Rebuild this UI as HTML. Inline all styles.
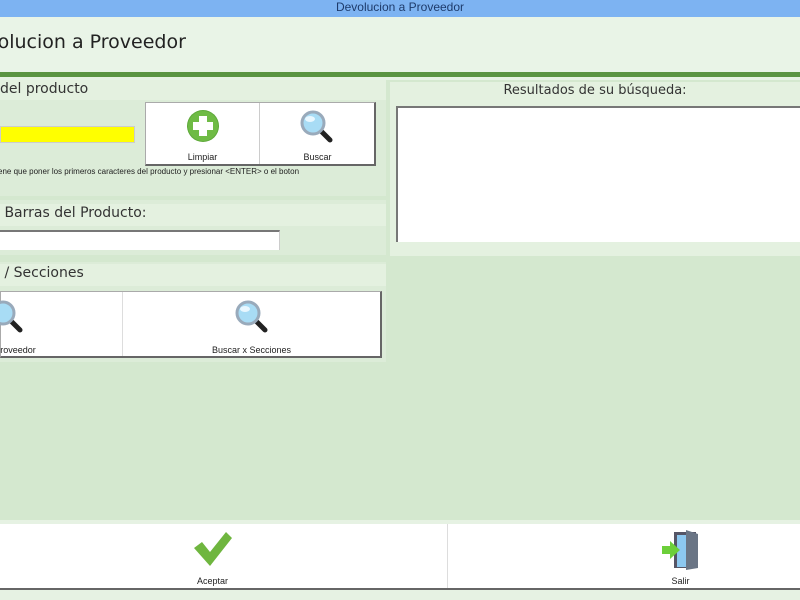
<!DOCTYPE html>
<html><head><meta charset="utf-8"><style>
*{margin:0;padding:0;box-sizing:border-box}
body{width:800px;height:600px;overflow:hidden;background:#d4e8cf;font-family:"DejaVu Sans","Liberation Sans",sans-serif;position:relative;color:#222}
.a{position:absolute}
.t{font-family:"Liberation Sans",sans-serif;font-size:9px;color:#222;text-align:center}
.btn{background:#fff;border:1px solid #aaa;border-right:2px solid #666;border-bottom:2px solid #666}
.hdr{background:#e4f1e0;font-size:14px;color:#333}
</style></head><body>
<div class="a" style="left:0;top:0;width:800px;height:17px;background:#7db3f2;text-align:center;font-family:'Liberation Sans',sans-serif;font-size:12px;color:#1e3b6b;line-height:14px">Devolucion a Proveedor</div>
<div class="a" style="left:0;top:17px;width:800px;height:55px;background:#e9f4e7"></div>
<div class="a" style="left:-40px;top:31px;font-size:19px;color:#222">Devolucion a Proveedor</div>
<div class="a" style="left:0;top:72px;width:800px;height:5px;background:#5a9442"></div>
<div class="a" style="left:0;top:77px;width:800px;height:3px;background:#e6f2e3"></div>

<div class="a" style="left:0;top:80px;width:386px;height:116px;background:#dcecd8"></div>
<div class="a hdr" style="left:0;top:80px;width:386px;height:20px;padding-top:1px;left:0">del producto</div>
<div class="a" style="left:0;top:126px;width:135px;height:17px;background:#ffff00;border:1px solid #ccc"></div>
<div class="a btn" style="left:145px;top:102px;width:231px;height:64px"></div>
<div class="a" style="left:259px;top:103px;width:1px;height:61px;background:#ccc"></div>
<svg class="a" style="left:184px;top:108px" width="38" height="38" viewBox="0 0 38 38"><circle cx="19" cy="18" r="16" fill="#5ea93a"/><circle cx="19" cy="18" r="15" fill="#6fbb45"/><path d="M15 8h8v6h6v8h-6v6h-8v-6h-6v-8h6z" fill="#fff"/></svg>
<svg class="a" style="left:298px;top:108px" width="38" height="38" viewBox="0 0 38 38"><line x1="23" y1="23" x2="32" y2="32" stroke="#222" stroke-width="5" stroke-linecap="round"/><circle cx="15" cy="15" r="11" fill="#a8dcf5" stroke="#9ab" stroke-width="3"/><ellipse cx="12" cy="11" rx="5" ry="3" fill="#e8f7ff"/></svg>
<div class="a t" style="left:145px;top:152px;width:115px">Limpiar</div>
<div class="a t" style="left:260px;top:152px;width:115px">Buscar</div>
<div class="a" style="left:-2px;top:167px;font-family:'Liberation Sans',sans-serif;font-size:8px;color:#222">ene que poner los primeros caracteres del producto y presionar &lt;ENTER&gt; o el boton</div>

<div class="a" style="left:0;top:200px;width:386px;height:55px;background:#dcecd8"></div>
<div class="a hdr" style="left:0;top:204px;width:386px;height:22px;padding-top:1px">&nbsp;Barras del Producto:</div>
<div class="a" style="left:0;top:230px;width:280px;height:20px;background:#fff;border-top:2px solid #777;border-right:1px solid #ccc"></div>

<div class="a" style="left:0;top:262px;width:386px;height:100px;background:#dcecd8"></div>
<div class="a hdr" style="left:0;top:264px;width:386px;height:22px;padding-top:1px">&nbsp;/ Secciones</div>
<div class="a btn" style="left:0;top:291px;width:382px;height:67px"></div>
<div class="a" style="left:122px;top:292px;width:1px;height:64px;background:#ddd"></div>
<svg class="a" style="left:-12px;top:298px" width="38" height="38" viewBox="0 0 38 38"><line x1="23" y1="23" x2="32" y2="32" stroke="#222" stroke-width="5" stroke-linecap="round"/><circle cx="15" cy="15" r="11" fill="#a8dcf5" stroke="#9ab" stroke-width="3"/></svg>
<svg class="a" style="left:233px;top:298px" width="38" height="38" viewBox="0 0 38 38"><line x1="23" y1="23" x2="32" y2="32" stroke="#222" stroke-width="5" stroke-linecap="round"/><circle cx="15" cy="15" r="11" fill="#a8dcf5" stroke="#9ab" stroke-width="3"/><ellipse cx="12" cy="11" rx="5" ry="3" fill="#e8f7ff"/></svg>
<div class="a t" style="left:-30px;top:345px;width:90px">Proveedor</div>
<div class="a t" style="left:123px;top:345px;width:257px">Buscar x Secciones</div>

<div class="a" style="left:390px;top:82px;width:410px;height:174px;background:#e4f1e0"></div>
<div class="a" style="left:390px;top:83px;width:410px;text-align:center;font-size:13px;color:#333">Resultados de su búsqueda:</div>
<div class="a" style="left:396px;top:106px;width:404px;height:136px;background:#fff;border-top:2px solid #777;border-left:2px solid #777"></div>

<div class="a" style="left:0;top:520px;width:800px;height:80px;background:#e6f2e3"></div>
<div class="a" style="left:0;top:524px;width:800px;height:66px;background:#fff;border-bottom:2px solid #666"></div>
<div class="a" style="left:447px;top:524px;width:1px;height:64px;background:#ddd"></div>
<svg class="a" style="left:190px;top:530px" width="44" height="40" viewBox="0 0 44 40"><path d="M4 18l8-6 8 10 16-20 6 6-22 28z" fill="#6fb63f"/></svg>
<svg class="a" style="left:660px;top:528px" width="44" height="44" viewBox="0 0 44 44"><rect x="14" y="4" width="22" height="36" fill="#556"/><rect x="17" y="7" width="12" height="32" fill="#8cc8f0"/><path d="M26 2l12 4v34l-12 2z" fill="#6a7585"/><path d="M2 18h8v-5l10 9-10 9v-5h-8z" fill="#6ccf3a"/></svg>
<div class="a t" style="left:0;top:576px;width:425px">Aceptar</div>
<div class="a t" style="left:448px;top:576px;width:465px">Salir</div>
</body></html>
